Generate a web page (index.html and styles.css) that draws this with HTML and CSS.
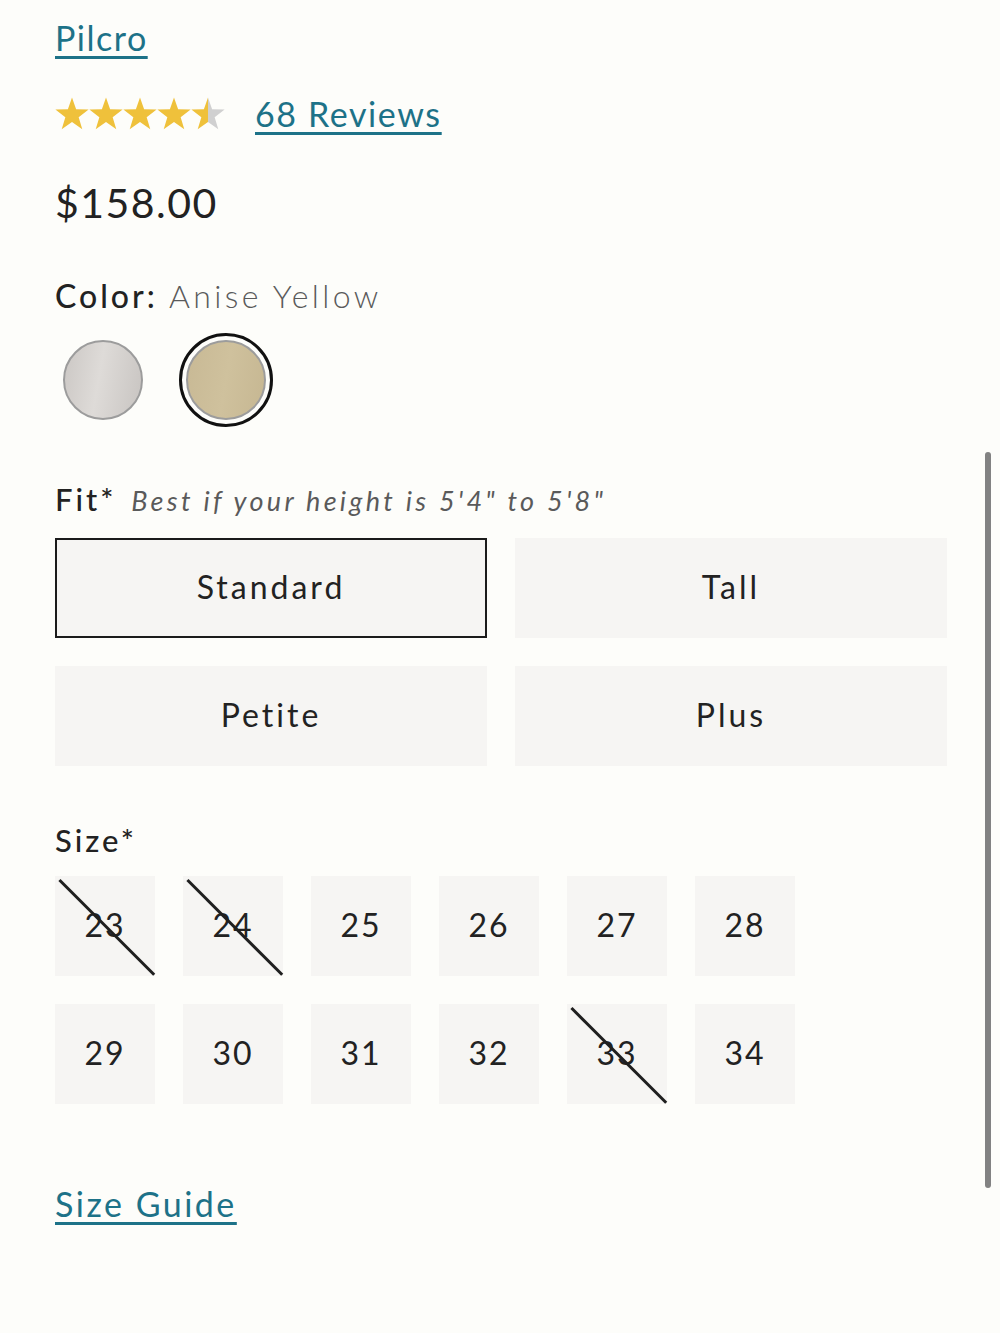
FILE: index.html
```html
<!DOCTYPE html>
<html lang="en">
<head>
    <meta charset="UTF-8">
    <meta name="viewport" content="width=device-width, initial-scale=1.0">
    <title>Pilcro - Product Options</title>
    <link rel="stylesheet" href="styles.css">
</head>
<body>
    <div class="product">
        <a class="brand link" href="#">Pilcro</a>

        <div class="rating">
            <svg class="stars" width="172" height="34" viewBox="0 0 172 34">
                <defs>
                    <path id="star" d="M17 0.5L21.11 12.34 33.64 12.59 23.66 20.16 27.29 32.16 17 25 6.71 32.16 10.34 20.16 0.36 12.59 12.89 12.34Z"/>
                    <linearGradient id="half">
                        <stop offset="50%" stop-color="#efc13b"/>
                        <stop offset="50%" stop-color="#d0d0d0"/>
                    </linearGradient>
                </defs>
                <use href="#star" x="0" fill="#efc13b"/>
                <use href="#star" x="34" fill="#efc13b"/>
                <use href="#star" x="68" fill="#efc13b"/>
                <use href="#star" x="102" fill="#efc13b"/>
                <use href="#star" x="136" fill="url(#half)"/>
            </svg>
            <a class="link reviews" href="#">68 Reviews</a>
        </div>

        <div class="price">$158.00</div>

        <div class="label color-label">Color: <span class="value">Anise Yellow</span></div>
        <div class="swatches">
            <span class="swatch"><span class="chip grey"></span></span>
            <span class="swatch selected"><span class="chip sand"></span></span>
        </div>

        <div class="label fit-label">Fit* <span class="hint">Best if your height is 5'4" to 5'8"</span></div>
        <div class="fit-grid">
            <button class="opt selected">Standard</button>
            <button class="opt">Tall</button>
            <button class="opt">Petite</button>
            <button class="opt">Plus</button>
        </div>

        <div class="label size-label">Size*</div>
        <div class="size-grid">
            <button class="size out">23</button>
            <button class="size out">24</button>
            <button class="size">25</button>
            <button class="size">26</button>
            <button class="size">27</button>
            <button class="size">28</button>
            <button class="size">29</button>
            <button class="size">30</button>
            <button class="size">31</button>
            <button class="size">32</button>
            <button class="size out">33</button>
            <button class="size">34</button>
        </div>

        <a class="link guide" href="#">Size Guide</a>
    </div>

    <div class="scrollbar"></div>
</body>
</html>
```

FILE: styles.css
```css
body {
    margin: 0;
    background: #fdfdfa;
    font-family: Lato, 'Noto Sans', sans-serif;
    color: #222;
}
.product {
    padding: 14px 53px 100px 55px;
}
.link {
    color: #1d7288;
    text-decoration: underline;
    text-decoration-thickness: 3px;
    text-underline-offset: 5px;
    letter-spacing: 1.5px;
}
.brand {
    display: inline-block;
    font-size: 34px;
    line-height: 48px;
}
.rating {
    display: flex;
    align-items: center;
    gap: 28px;
    margin-top: 32px;
}
.stars { display: block; }
.reviews {
    font-size: 34px;
    line-height: 40px;
    letter-spacing: 1.6px;
}
.price {
    font-size: 41px;
    letter-spacing: 1.5px;
    margin-top: 44px;
    line-height: 50px;
    font-weight: 400;
}
.label {
    font-size: 32px;
    letter-spacing: 3px;
    font-weight: 500;
    line-height: 40px;
}
.color-label { margin-top: 48px; }
.value {
    color: #5a5a5a;
    font-weight: 300;
    letter-spacing: 3.4px;
}
.swatches {
    display: flex;
    align-items: center;
    gap: 34px;
    margin-top: 17px;
    margin-left: 6px;
}
.swatch {
    width: 84px;
    height: 84px;
    display: flex;
    align-items: center;
    justify-content: center;
    border-radius: 50%;
}
.swatch.selected {
    width: 88px;
    height: 88px;
    border: 3px solid #111;
}
.chip {
    width: 76px;
    height: 76px;
    border-radius: 50%;
    border: 2px solid #9c9c9c;
}
.chip.grey { background: linear-gradient(100deg, #cbc7c4, #dedbd8 45%, #c8c4c1); }
.chip.sand { background: linear-gradient(100deg, #c8b995, #cfc19d 50%, #c6b792); }

.fit-label { margin-top: 52px; font-size: 31px; }
.hint {
    font-style: italic;
    font-weight: 400;
    font-size: 27px;
    color: #5a5a5a;
    letter-spacing: 3.3px;
    margin-left: 4px;
}
.fit-grid {
    display: grid;
    grid-template-columns: 1fr 1fr;
    gap: 28px;
    margin-top: 17px;
}
.opt, .size {
    font-family: inherit;
    background: #f6f5f3;
    border: 2px solid #f6f5f3;
    color: #222;
    font-size: 32px;
    letter-spacing: 2px;
    padding: 0 0 4px;
    cursor: pointer;
}
.opt {
    height: 100px;
    letter-spacing: 3px;
}
.opt.selected { border-color: #1b1b1b; }

.size-label { margin-top: 54px; font-size: 31px; letter-spacing: 3px; }
.size-grid {
    display: grid;
    grid-template-columns: repeat(6, 100px);
    gap: 28px;
    margin-top: 16px;
}
.size {
    height: 100px;
    position: relative;
}
.size.out::after {
    content: "";
    position: absolute;
    left: -17px;
    top: 48px;
    width: 134px;
    height: 2.5px;
    background: #1f1f1f;
    transform: rotate(45deg);
}
.guide {
    display: inline-block;
    font-size: 34px;
    letter-spacing: 2.5px;
    margin-top: 79px;
}
.scrollbar {
    position: fixed;
    right: 9px;
    top: 452px;
    width: 6px;
    height: 736px;
    border-radius: 3px;
    background: #828282;
}
```
